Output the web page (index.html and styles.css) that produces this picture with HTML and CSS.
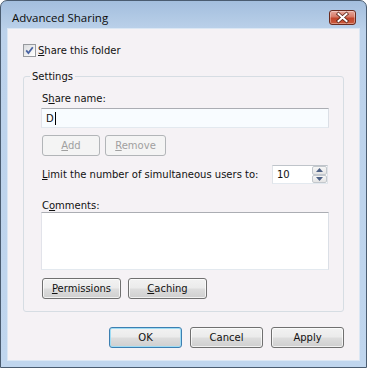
FILE: index.html
```html
<!DOCTYPE html>
<html>
<head>
<meta charset="utf-8">
<title>Advanced Sharing</title>
<link rel="stylesheet" href="styles.css">
</head>
<body>
<div class="window">
  <div class="titlebar">
    <span class="title">Advanced Sharing</span>
    <button class="close" aria-label="Close">
      <svg width="27" height="15" viewBox="0 0 27 15">
        <path d="M9.5 4 L17.5 11 M17.5 4 L9.5 11" stroke="#5a2418" stroke-width="3.6" stroke-linecap="square" fill="none"/>
        <path d="M9.5 4 L17.5 11 M17.5 4 L9.5 11" stroke="#ffffff" stroke-width="2" stroke-linecap="square" fill="none"/>
      </svg>
    </button>
  </div>
  <div class="client">
    <label class="check-row">
      <span class="checkbox">
        <svg width="11" height="11" viewBox="0 0 11 11"><path d="M2.2 5.4 L4.4 8 L8.8 2.2" stroke="#4a64a3" stroke-width="1.8" fill="none"/></svg>
      </span>
      <span><u>S</u>hare this folder</span>
    </label>
    <div class="group">
      <span class="legend">Settings</span>
      <div class="label first">S<u>h</u>are name:</div>
      <div class="textbox">D<span class="caret"></span></div>
      <div class="btn-row">
        <button class="btn disabled add"><u>A</u>dd</button>
        <button class="btn disabled remove"><u>R</u>emove</button>
      </div>
      <div class="limit-row">
        <span><u>L</u>imit the number of simultaneous users to:</span>
        <div class="spin">
          <span class="spin-value">10</span>
          <div class="spin-btns">
            <span class="spin-btn"><svg width="7" height="4" viewBox="0 0 7 4"><path d="M0 4 L3.5 0 L7 4 Z" fill="#4d6185"/></svg></span>
            <span class="spin-btn"><svg width="7" height="4" viewBox="0 0 7 4"><path d="M0 0 L3.5 4 L7 0 Z" fill="#4d6185"/></svg></span>
          </div>
        </div>
      </div>
      <div class="label comments-label">C<u>o</u>mments:</div>
      <div class="textarea"></div>
      <div class="btn-row lower">
        <button class="btn wide"><u>P</u>ermissions</button>
        <button class="btn wide"><u>C</u>aching</button>
      </div>
    </div>
    <div class="footer">
      <button class="btn dlg default">OK</button>
      <button class="btn dlg">Cancel</button>
      <button class="btn dlg">Apply</button>
    </div>
  </div>
</div>
</body>
</html>
```
FILE: styles.css
```css
html, body {
  margin: 0;
  padding: 0;
  background: #ffffff;
}
body {
  font-family: "DejaVu Sans", "Liberation Sans", sans-serif;
  font-size: 10px;
  color: #111111;
}
u { text-decoration: underline; text-underline-offset: 1px; }

.window {
  width: 367px;
  height: 368px;
  box-sizing: border-box;
  border: 1px solid #4a5c70;
  border-radius: 7px 7px 0 0;
  background: linear-gradient(180deg, #a3bedd 0px, #b2cae5 18px, #bcd2eb 30px, #c0d6ee 100%);
  padding: 0 7px 7px 7px;
  display: flex;
  flex-direction: column;
}

.titlebar {
  height: 28px;
  flex: none;
  display: flex;
  align-items: flex-start;
  justify-content: space-between;
  padding-left: 4px;
  padding-right: 3px;
}
.title {
  font-family: "Open Sans", "DejaVu Sans", sans-serif;
  font-size: 11.5px;
  line-height: 15px;
  margin-top: 9px;
  color: #0b0b0b;
}
.close {
  margin-top: 9px;
  width: 27px;
  height: 15px;
  padding: 0;
  border: 1px solid #6b2b1e;
  border-radius: 3px;
  background: linear-gradient(180deg, #e8a99d 0%, #d77a66 45%, #c2452b 55%, #c95a3c 100%);
  box-shadow: inset 0 0 0 1px rgba(255,255,255,0.35);
  display: flex;
  align-items: center;
  justify-content: center;
  box-sizing: border-box;
}
.close svg { display: block; margin: -1px; }

.client {
  flex: 1;
  background: #f5f2f5;
  box-shadow: 0 0 0 1px #dbe7f4;
  padding: 15px 15px 0 15px;
  display: flex;
  flex-direction: column;
}

.check-row {
  display: flex;
  align-items: center;
  gap: 2px;
  height: 13px;
  line-height: 13px;
}
.checkbox {
  width: 13px;
  height: 13px;
  box-sizing: border-box;
  border: 1px solid #979a9e;
  background: linear-gradient(135deg, #d9dbde 0%, #f2f2f2 60%, #ffffff 100%);
  display: flex;
  align-items: center;
  justify-content: center;
}
.checkbox svg { display: block; }

.group {
  position: relative;
  margin-top: 19px;
  border: 1px solid #d6dde3;
  border-radius: 3px;
  padding: 0 14px 12px 17px;
}
.legend {
  position: absolute;
  top: -7px;
  left: 6px;
  padding: 0 2px;
  background: #f5f2f5;
  line-height: 13px;
}

.label {
  line-height: 13px;
  height: 13px;
  padding-left: 1px;
}
.label.first { margin-top: 15px; }
.label.comments-label { margin-top: 15px; }

.textbox {
  margin-top: 3px;
  height: 20px;
  box-sizing: border-box;
  border: 1px solid;
  border-color: #abadb3 #dbdfe6 #e3e9ef #e2e3ea;
  background: #f8fcff;
  padding-left: 4px;
  display: flex;
  align-items: center;
  line-height: 13px;
}
.caret {
  display: inline-block;
  width: 1px;
  height: 13px;
  background: #000;
  margin-left: 1px;
}

.btn-row {
  display: flex;
  gap: 5px;
  margin-top: 7px;
  padding-left: 1px;
}
.btn-row.lower { margin-top: 8px; gap: 7px; }

.btn {
  font-family: inherit;
  font-size: 10px;
  color: #111;
  height: 21px;
  box-sizing: border-box;
  padding: 0;
  border: 1px solid #707070;
  border-radius: 3px;
  background: linear-gradient(180deg, #f2f2f2 0%, #ebebeb 48%, #dddddd 52%, #cfcfcf 100%);
  box-shadow: inset 0 0 0 1px rgba(255,255,255,0.7);
  line-height: 13px;
  text-align: center;
}
.btn.disabled {
  color: #a0a0a0;
  border-color: #b2b5b8;
  background: #f4f4f4;
  box-shadow: none;
}
.btn.add { width: 58px; }
.btn.remove { width: 61px; }
.btn.wide { width: 79px; }
.btn.dlg { width: 73px; }
.btn.default {
  border-color: #3c7fb1;
  box-shadow: inset 0 0 0 1px #9fdcf4;
}

.limit-row {
  margin-top: 9px;
  display: flex;
  align-items: center;
  justify-content: space-between;
  padding-left: 1px;
  height: 19px;
}
.spin {
  width: 56px;
  height: 19px;
  box-sizing: border-box;
  border: 1px solid;
  border-color: #bfc4ca #dfe3e8 #e3e9ef #dfe3e8;
  background: #ffffff;
  display: flex;
  align-items: stretch;
  margin-right: 1px;
}
.spin-value {
  flex: 1;
  padding-left: 4px;
  display: flex;
  align-items: center;
  line-height: 13px;
}
.spin-btns {
  width: 15px;
  display: flex;
  flex-direction: column;
}
.spin-btn {
  flex: 1;
  border: 1px solid #c3c8cd;
  border-radius: 2px;
  background: linear-gradient(180deg, #f7f7f7 0%, #e4e4e4 100%);
  display: flex;
  align-items: center;
  justify-content: center;
}
.spin-btn svg { display: block; }

.textarea {
  height: 58px;
  box-sizing: border-box;
  border: 1px solid;
  border-color: #abadb3 #dbdfe6 #e3e9ef #e2e3ea;
  background: #ffffff;
}

.footer {
  margin-top: 15px;
  display: flex;
  justify-content: flex-end;
  gap: 8px;
}
```
